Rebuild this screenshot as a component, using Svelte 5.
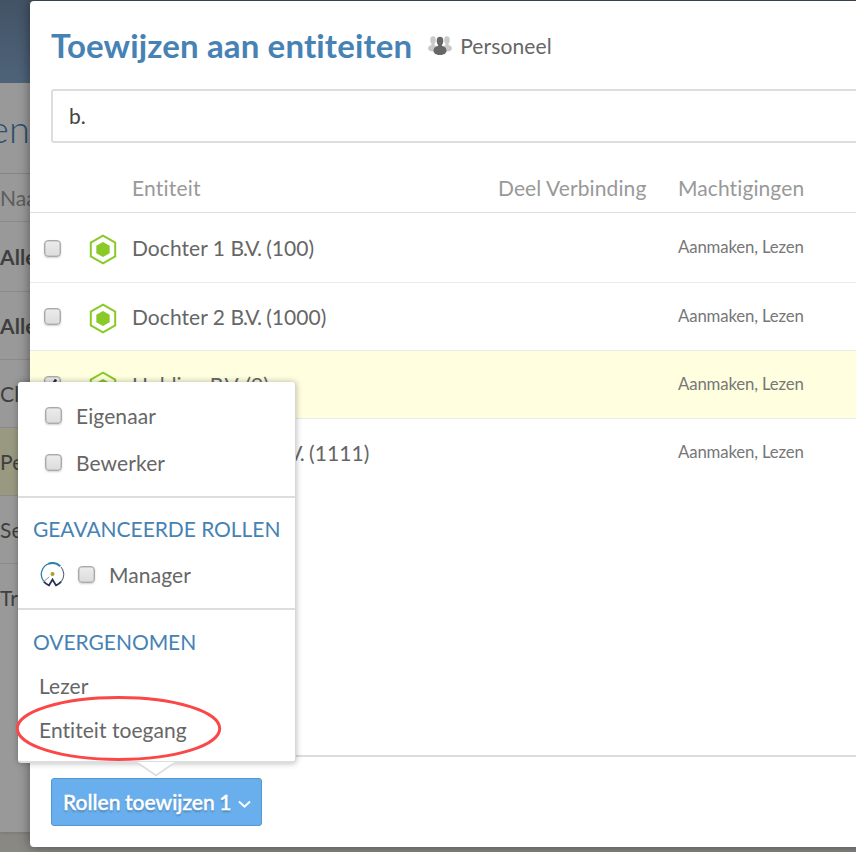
<script>
  const background = [
    { text: 'Naam', kind: 'head' },
    { text: 'Alle', kind: 'bold first' },
    { text: 'Alle', kind: 'bold' },
    { text: 'Clië', kind: '' },
    { text: 'Pers', kind: 'selected' },
    { text: 'Secr', kind: '' },
    { text: 'Train', kind: 'last' }
  ];
  const entities = [
    { name: 'Dochter 1', code: '(100)', rights: 'Aanmaken, Lezen', checked: false },
    { name: 'Dochter 2', code: '(1000)', rights: 'Aanmaken, Lezen', checked: false },
    { name: 'Holding', code: '(9)', rights: 'Aanmaken, Lezen', checked: true },
    { name: 'Kleindochter 1', code: '(1111)', rights: 'Aanmaken, Lezen', checked: false }
  ];
</script>

{#snippet box(checked)}
  <span class="box">
    {#if checked}
      <svg width="17" height="17" viewBox="0 0 17 17"><path d="M4 9l3 3.500 5-8" fill="none" stroke="#333" stroke-width="2.600" /></svg>
    {/if}
  </span>
{/snippet}

<div class="screen">
  <div class="page">
    <div class="topbar"></div>
    <div class="heading"><span>en</span></div>
    {#each background as row}
      <div class="bg-row {row.kind}">{row.text}</div>
    {/each}
  </div>

  <div class="modal">
    <header>
      <h1>Toewijzen aan entiteiten</h1>
      <svg class="people" width="24" height="20" viewBox="0 0 24 20">
        <g fill="#c9c9c9">
          <ellipse cx="5" cy="4" rx="2.800" ry="3.800" /><path d="M3.400 6h3.200v3.200c2 .6 3.400 1.600 3.400 3.600 0 1.700-2.200 2.700-5 2.700S0 14.500 0 12.500c0-2 1.600-3 3.400-3.500z" />
          <ellipse cx="19" cy="4" rx="2.800" ry="3.800" /><path d="M20.600 6h-3.200v3.200c-2 .6-3.400 1.600-3.400 3.600 0 1.700 2.200 2.700 5 2.700s5-1 5-3c0-2-1.600-3-3.400-3.500z" />
        </g>
        <g fill="#666"><ellipse cx="12" cy="5" rx="3.300" ry="4.200" /><path d="M10 7h4v3c2.600.5 4.500 2 4.500 4.500 0 3-2.800 4.500-6.500 4.500s-6.500-1.500-6.500-4.500C5.500 12 7.400 10.500 10 10z" /></g>
      </svg>
      <span class="group">Personeel</span>
    </header>

    <div class="search">b.</div>

    <div class="table">
      <div class="row labels">
        <span class="name">Entiteit</span>
        <span class="share">Deel Verbinding</span>
        <span>Machtigingen</span>
      </div>
      {#each entities as entity}
        <div class="row" class:active={entity.checked}>
          <span class="check">{@render box(entity.checked)}</span>
          <svg class="hex" width="28" height="31" viewBox="0 0 28 31">
            <path d="M14 1.700l12.200 6.900v13.800L14 29.300 1.800 22.400V8.600z" fill="none" stroke="#8aca28" stroke-width="2" />
            <path d="M14 8l6.700 3.700v7.600L14 23l-6.700-3.700v-7.600z" fill="#8aca28" />
          </svg>
          <span class="entity">{entity.name} <span class="bv">B.V.</span> {entity.code}</span>
          <span class="rights">{entity.rights}</span>
        </div>
      {/each}
    </div>

    <footer>
      <button>
        <span>Rollen toewijzen 1</span>
        <svg width="13" height="9" viewBox="0 0 13 9"><path d="M1 1.500l5.500 5.200L12 1.500" fill="none" stroke="#fff" stroke-width="2" /></svg>
      </button>
    </footer>
  </div>

  <div class="menu">
    <div class="group-a">
      <label>{@render box(false)}<span>Eigenaar</span></label>
      <label>{@render box(false)}<span>Bewerker</span></label>
    </div>
    <div class="group-b">
      <h2>GEAVANCEERDE ROLLEN</h2>
      <label>
        <svg class="emblem" width="25" height="25" viewBox="0 0 25 25" fill="none">
          <path d="M3.600 19.200A11.300 11.300 0 0 1 9 1.700" stroke="#2f7ea5" stroke-width="1.300" />
          <path d="M8.500 1.800A11.300 11.300 0 0 1 20.300 4.200" stroke="#2f82ab" stroke-width="2" />
          <path d="M21 5A11.300 11.300 0 0 1 21.400 19.400" stroke="#5c6475" stroke-width="1.100" />
          <path d="M3.800 19.500Q5.600 22 9 23.400L12.500 17.600 16 23.400Q19.400 22 21.200 19.500" stroke="#263258" stroke-width="1.800" />
          <path d="M3.800 19.500l5.500-4.700" stroke="#7c8790" stroke-width=".9" />
          <circle cx="12.500" cy="12" r="2" fill="#b19b2c" />
        </svg>
        {@render box(false)}<span>Manager</span>
      </label>
    </div>
    <div class="group-c">
      <h2>OVERGENOMEN</h2>
      <p>Lezer</p>
      <p>Entiteit toegang</p>
    </div>
    <svg class="pointer" width="38" height="15" viewBox="0 0 38 15">
      <path d="M0 0l19 13L38 0z" fill="#fff" /><path d="M1 1l18 12.500L37 1" fill="none" stroke="#dcdedd" stroke-width="1.600" />
    </svg>
  </div>

  <svg class="ring" width="210" height="68" viewBox="0 0 210 68">
    <ellipse cx="104.500" cy="33.500" rx="101.200" ry="31" fill="none" stroke="#fb4748" stroke-width="3" />
  </svg>
</div>

<style>
  :global(body) { margin: 0; overflow: hidden; }
  .screen { position: relative; width: 856px; height: 852px; overflow: hidden; background: #8a8883; font: 21px/30px Lato, sans-serif; letter-spacing: .1px; color: #666; box-sizing: border-box; }
  .screen * { box-sizing: border-box; }
  .page { height: 832px; width: 856px; background: #999; box-shadow: 0 1px 3px #777; }
  .topbar { height: 83px; background: linear-gradient(#435365, #4e637a); }
  .heading { height: 91px; width: 30px; padding-top: 20px; display: flex; justify-content: flex-end; font-size: 38px; line-height: 50px; font-weight: 300; color: #2c4f6d; border-bottom: 1px solid #858585; }
  .bg-row { height: 68px; line-height: 67px; border-bottom: 1px solid #8a8a8a; color: #3f3f3f; width: 60px; overflow: hidden; white-space: nowrap; }
  .bg-row.head { height: 48px; line-height: 47px; color: #5d5d5d; }
  .bg-row.first { height: 70px; line-height: 69px; }
  .bg-row.bold { font-weight: 700; }
  .bg-row.selected { background: #999881; }
  .bg-row.last { border: 0; }

  .modal { position: absolute; left: 30px; top: 1px; width: 900px; height: 846px; background: #fff; border-radius: 4px; box-shadow: 0 0 12px rgba(0, 0, 0, .45); display: flex; flex-direction: column; }
  header { height: 88px; padding: 0 21px; display: flex; align-items: center; white-space: nowrap; }
  h1 { margin: 0 16px 1px 0; font-size: 33px; line-height: 44px; letter-spacing: .14px; font-weight: 700; color: #4682b4; }
  .people { margin: 1px 8px 0 0; }
  .group { margin-top: 1px; }
  .search { height: 54px; margin-left: 21px; border: 2px solid #dcdddd; border-radius: 3px; padding-left: 16px; line-height: 50px; color: #444; }
  .table { flex: 1; padding-top: 22px; }
  .row { height: 68px; display: flex; align-items: center; border-bottom: 1px solid #e9eaea; padding-left: 14px; white-space: nowrap; }
  .row.labels { height: 48px; border-color: #dedfdf; color: #999; padding: 0 0 2px 102px; }
  .labels + .row { height: 70px; }
  .row:last-child { border-color: transparent; }
  .row:last-child .entity { padding: 0; }
  .name { width: 366px; letter-spacing: .2px; }
  .share { width: 180px; }
  .check { width: 45px; display: flex; }
  .labels + .row .check { padding-top: 1px; }
  .hex { margin: 4px 15px 0 0; }
  .entity { width: 546px; padding-top: 1px; letter-spacing: .05px; }
  .bv { letter-spacing: -1.100px; }
  .rights { font-size: 16.800px; letter-spacing: -.16px; color: #777; margin-top: -2px; }
  .active { background: #ffffdf; }
  .box { width: 17px; height: 17px; flex: none; display: block; border: 1.500px solid #aaa; border-radius: 4px; background: linear-gradient(#ececec, #dcdcdc); box-shadow: inset 0 0 0 .5px #b5b5b5, 0 1px 2px rgba(0, 0, 0, .18); }
  .box svg { display: block; margin: -2px 0 0 -1px; }

  footer { height: 92px; border-top: 2px solid #dcdddd; padding: 20px 21px; }
  button { width: 211px; height: 48px; display: flex; align-items: center; gap: 7px; padding: 0 0 0 11px; margin: 1px 0 0; border: 1px solid #5496d2; border-radius: 3px; background: #69afed; color: #fff; font: 500 21px/46px Lato, sans-serif; letter-spacing: .02px; word-spacing: -.8px; -webkit-text-stroke: .4px #fff; text-shadow: 0 2px 2px rgba(0, 0, 0, .25); white-space: nowrap; }
  button svg { margin-top: 4px; }

  .menu { position: absolute; left: 18px; top: 382px; width: 278px; height: 381px; background: #fff; border-right: 1px solid #d6d7d7; border-bottom: 2px solid #dcdddd; border-radius: 3px; box-shadow: 0 0 6px rgba(0, 0, 0, .3); white-space: nowrap; }
  .group-a { height: 116px; padding: 10px 0 0 27px; border-bottom: 2px solid #dcdddd; }
  .group-b { height: 112px; padding: 16px 0 0 15px; border-bottom: 2px solid #dcdddd; }
  .group-c { padding: 17px 0 0 15px; }
  label { display: flex; align-items: center; height: 47px; gap: 14px; }
  .group-a label:first-child { margin-top: -11px; height: 69px; }
  .group-a label:last-child { margin-top: -11px; }
  h2 { margin: 0; font-size: 21px; line-height: 30px; letter-spacing: -.05px; font-weight: 400; color: #4682b4; }
  .group-b label { padding-left: 7px; margin-top: 7px; }
  .emblem { margin-right: -1px; }
  p { margin: 0 0 0 6px; line-height: 44px; height: 44px; letter-spacing: .05px; }
  h2 + p { margin-top: 7px; }
  .pointer { position: absolute; left: 119px; top: 380px; }
  .ring { position: absolute; left: 14px; top: 695px; }
</style>
